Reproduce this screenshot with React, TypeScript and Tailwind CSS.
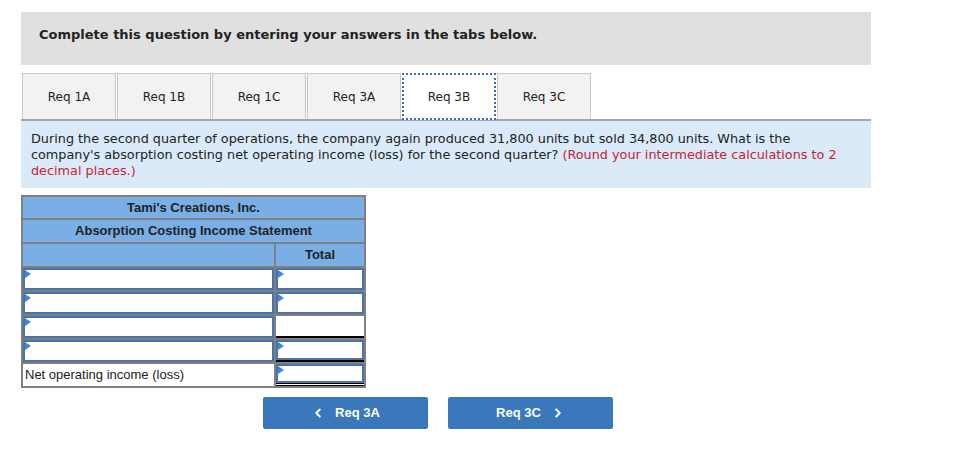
import { ChevronLeft, ChevronRight } from 'lucide-react';

const tabs = ['Req 1A', 'Req 1B', 'Req 1C', 'Req 3A', 'Req 3B', 'Req 3C'];

function Marker() {
  return (
    <span className="absolute left-0 top-0 w-0 h-0 border-t-[4px] border-b-[4px] border-l-[6px] border-t-transparent border-b-transparent border-l-[#3f86d6]" />
  );
}

function InputCell({ marker = true }: { marker?: boolean }) {
  return (
    <div className="relative h-full border-2 border-[#4a74a8] bg-white">
      {marker && <Marker />}
    </div>
  );
}

export default function App() {
  return (
    <div className="bg-white w-[955px] h-[457px] pl-[21px] pt-[12px] font-['DejaVu_Sans',sans-serif]">
      {/* Header */}
      <div className="w-[850px] h-[53px] bg-[#e0e0e0] pl-[18px] pt-[13px]">
        <p className="text-[13px] font-bold text-[#222]">Complete this question by entering your answers in the tabs below.</p>
      </div>

      {/* Tabs */}
      <div className="w-[850px] mt-[8px] flex gap-[1px] pl-[1px] border-b-2 border-[#a6a6a6]">
        {tabs.map(t => (
          <div
            key={t}
            className={
              t === 'Req 3B'
                ? 'w-[94px] h-[47px] -mb-[2px] flex items-center justify-center bg-white border-2 border-dotted border-[#3a6fb8] text-[12px] text-[#222]'
                : 'w-[94px] h-[46px] flex items-center justify-center bg-[#f2f2f2] border border-[#c8c8c8] border-b-0 text-[12px] text-[#222]'
            }
          >
            {t}
          </div>
        ))}
      </div>

      {/* Question */}
      <div className="w-[850px] h-[67px] bg-[#dbeaf8] px-[10px] pt-[10px] text-[12.8px] leading-[16px] text-[#222]">
        During the second quarter of operations, the company again produced 31,800 units but sold 34,800 units. What is the company's absorption costing net operating income (loss) for the second quarter?{' '}
        <span className="text-[#c8232c]">(Round your intermediate calculations to 2 decimal places.)</span>
      </div>

      {/* Table */}
      <div className="mt-[7px] w-[345px] border-2 border-[#808080] font-['Liberation_Sans',Arial,sans-serif] text-[13px] text-[#222]">
        <div className="h-[21px] bg-[#79aee6] flex items-center justify-center font-bold">Tami's Creations, Inc.</div>
        <div className="h-[24px] bg-[#79aee6] border-t-2 border-[#808080] flex items-center justify-center font-bold">Absorption Costing Income Statement</div>
        <div className="h-[24px] bg-[#79aee6] border-t-2 border-[#808080] flex font-bold">
          <div className="w-[253px] border-r-2 border-[#808080]" />
          <div className="flex-1 flex items-center justify-center">Total</div>
        </div>
        {[0, 1, 2, 3].map(i => (
          <div key={i} className="h-[24px] flex border-t-2 border-[#808080]">
            <div className="w-[253px] border-r-2 border-[#808080]">
              <InputCell />
            </div>
            <div className={i === 2 ? 'flex-1 bg-white border-b-2 border-black' : i === 3 ? 'flex-1 border-b-2 border-black' : 'flex-1'}>
              {i !== 2 && <InputCell />}
            </div>
          </div>
        ))}
        <div className="h-[24px] flex border-t-2 border-[#808080]">
          <div className="w-[253px] border-r-2 border-[#808080] flex items-center pl-[2px]">Net operating income (loss)</div>
          <div className="flex-1 border-b-[3px] border-double border-black">
            <InputCell />
          </div>
        </div>
      </div>

      {/* Nav buttons */}
      <div className="mt-[9px] ml-[242px] flex gap-[20px] font-['Liberation_Sans',Arial,sans-serif]">
        <button className="w-[165px] h-[32px] rounded-[2px] bg-[#3a77bb] text-white text-[13px] font-bold flex items-center justify-center gap-[10px]">
          <ChevronLeft size={14} strokeWidth={3.5} />
          <span>Req 3A</span>
        </button>
        <button className="w-[165px] h-[32px] rounded-[2px] bg-[#3a77bb] text-white text-[13px] font-bold flex items-center justify-center gap-[10px]">
          <span>Req 3C</span>
          <ChevronRight size={14} strokeWidth={3.5} />
        </button>
      </div>
    </div>
  );
}
